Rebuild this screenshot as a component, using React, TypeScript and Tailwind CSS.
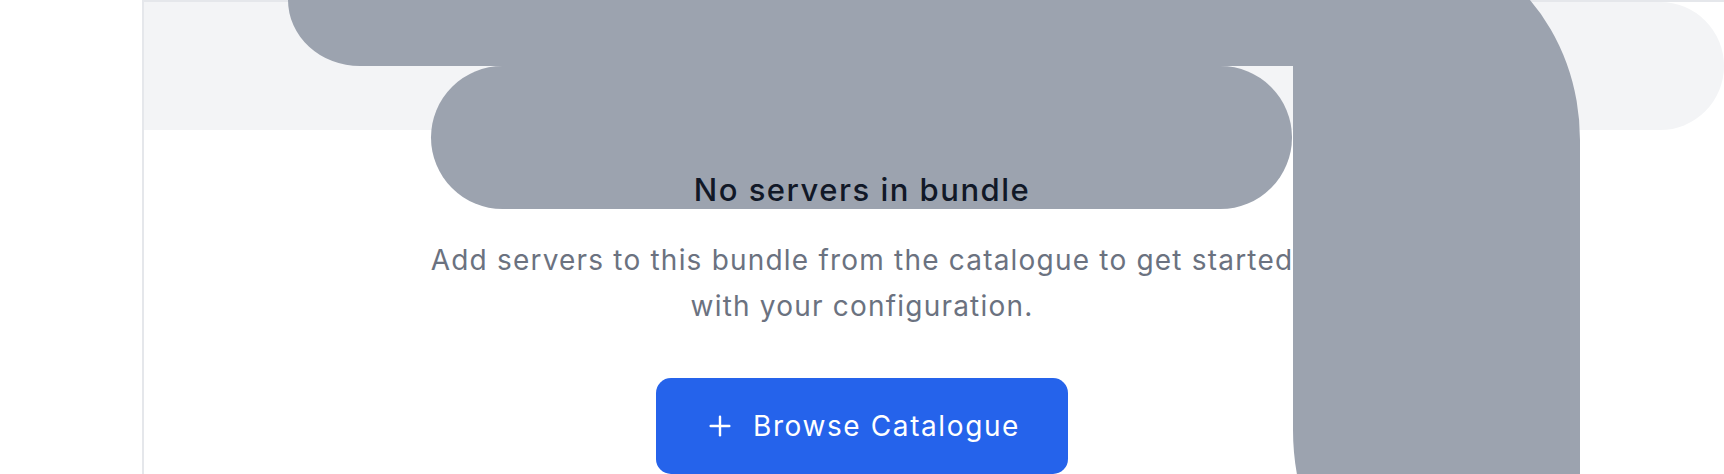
import React from "react";
import { Plus } from "lucide-react";

export default function App() {
  return (
    <div className="relative h-[474px] w-full overflow-hidden bg-white font-['Inter',sans-serif]">
      <div className="ml-[142px] h-full border-l-2 border-t-2 border-[#e5e7eb]">
        <div className="h-[128px] rounded-r-full bg-[#f3f4f6]" />
        <div className="relative z-10 flex flex-col items-center pr-[144px] pt-[42px]">
          <h2 className="text-[31px] font-medium leading-[36px] tracking-[1.5px] text-[#111827]">No servers in bundle</h2>
          <p className="mt-[29px] max-w-[900px] text-center text-[28px] leading-[46px] tracking-[1.2px] text-[#6b7280]">
            Add servers to this bundle from the catalogue to get started with your configuration.
          </p>
          <button className="mt-[49px] flex h-[96px] items-center gap-[17px] rounded-[15px] bg-[#2563eb] px-[48px] text-[28px] font-normal tracking-[1.6px] text-white">
            <Plus size={32} strokeWidth={1.8} />
            <span>Browse Catalogue</span>
          </button>
        </div>
      </div>
      <svg
        className="pointer-events-none absolute left-0 top-0"
        width="1724"
        height="474"
        viewBox="0 0 1724 474"
      >
        <path
          fill="#9ca3af"
          d="M 288 -120 L 288 0 A 72 66 0 0 0 360 66 L 1293 66 L 1293 430 A 250 250 0 0 0 1309.8 520 L 1580 520 L 1580 140 A 175 200 0 0 0 1405 -60 L 1405 -120 Z"
        />
        <rect x="431" y="66" width="861" height="143" rx="71.5" fill="#9ca3af" />
      </svg>
    </div>
  );
}
